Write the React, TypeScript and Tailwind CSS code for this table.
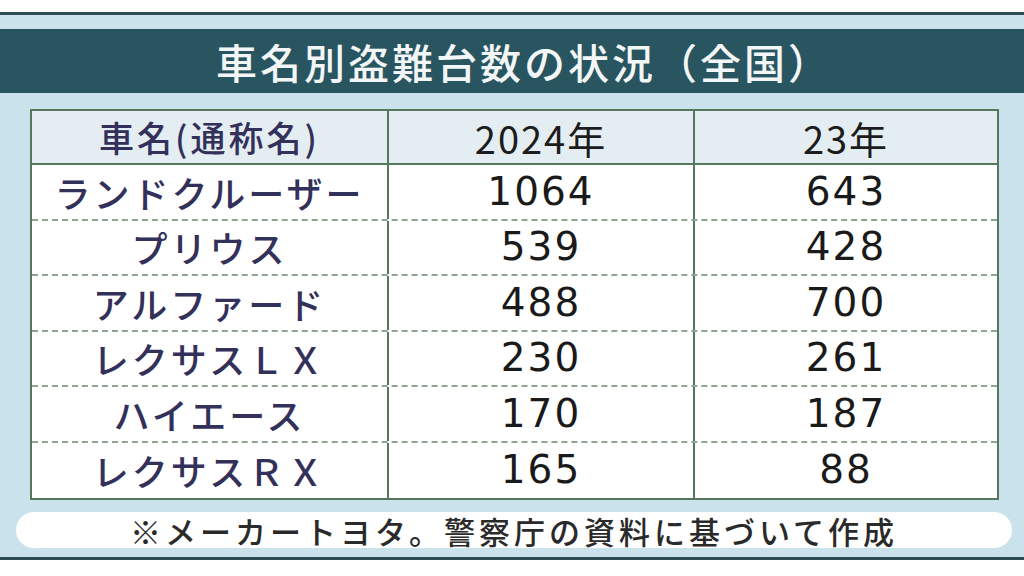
const rows = [
  { name: "ランドクルーザー", y2024: "1064", y2023: "643" },
  { name: "プリウス", y2024: "539", y2023: "428" },
  { name: "アルファード", y2024: "488", y2023: "700" },
  { name: "レクサスＬＸ", y2024: "230", y2023: "261" },
  { name: "ハイエース", y2024: "170", y2023: "187" },
  { name: "レクサスＲＸ", y2024: "165", y2023: "88" },
]

export default function App() {
  return (
    <div className="w-[1024px] h-[576px] bg-white pt-[12px] font-['Noto_Sans_CJK_JP',sans-serif] overflow-hidden">
      <div className="border-y-[3px] border-[#2d4c55] bg-[#c9e2ec] pt-[14px] pb-[9px]">
        {/* title */}
        <div className="h-[64px] bg-[#285560] flex items-center justify-center pl-[24px]">
          <span className="text-[41px] leading-none font-medium tracking-[3px] text-[#f3f6f6]">
            車名別盗難台数の状況（全国）
          </span>
        </div>

        {/* table */}
        <div className="mt-[16px] ml-[30px] w-[969px] border-2 border-[#55785c] bg-white">
          <div className="flex h-[54px] bg-[#e3edf2] border-b-2 border-[#55785c]">
            <div className="w-[357px] border-r-2 border-[#55785c] flex items-center justify-center text-[35px] font-medium text-[#33305a] tracking-[3px]">
              車名(通称名)
            </div>
            <div className="w-[306px] border-r-2 border-[#55785c] flex items-center justify-center text-[38px] text-[#1c1c1c] tracking-[2px]">
              2024年
            </div>
            <div className="flex-1 flex items-center justify-center text-[38px] text-[#1c1c1c] tracking-[2px]">
              23年
            </div>
          </div>
          {rows.map((r, i) => (
            <div
              key={r.name}
              className={
                i < rows.length - 1
                  ? "flex h-[55.5px] border-b-2 border-dashed border-[#8ea592]"
                  : "flex h-[55.5px]"
              }
            >
              <div className="w-[357px] border-r-2 border-[#55785c] flex items-center justify-center text-[36px] font-medium text-[#33305a] tracking-[3px]">
                {r.name}
              </div>
              <div className="w-[306px] border-r-2 border-[#55785c] flex items-center justify-center font-['DejaVu_Sans',sans-serif] text-[39px] text-[#1a1a1a] tracking-[2px]">
                {r.y2024}
              </div>
              <div className="flex-1 flex items-center justify-center font-['DejaVu_Sans',sans-serif] text-[39px] text-[#1a1a1a] tracking-[2px]">
                {r.y2023}
              </div>
            </div>
          ))}
        </div>

        {/* note */}
        <div className="mt-[12px] ml-[16px] w-[996px] h-[36px] rounded-full bg-white flex items-center justify-center">
          <span className="text-[31px] leading-none font-medium tracking-[4px] text-[#2a2a2a]">
            ※メーカートヨタ。警察庁の資料に基づいて作成
          </span>
        </div>
      </div>
    </div>
  )
}
